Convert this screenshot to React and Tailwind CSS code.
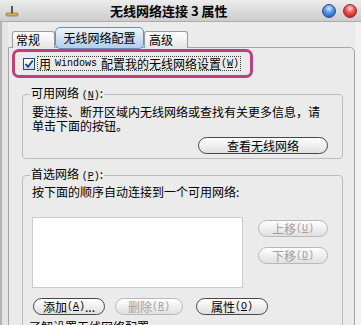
import React from 'react'

const cjk = "font-['Noto_Sans_CJK_SC','Liberation_Sans',sans-serif]"

// Mnemonic such as (W): mono bitmap-like parens with underlined letter
function Key({ k }) {
  return (
    <span className="font-['Liberation_Mono',monospace] text-[10px]">
      (<span className="underline underline-offset-1">{k}</span>)
    </span>
  )
}

function Btn({ children, disabled, className = '' }) {
  return (
    <div
      className={
        'flex h-[17px] items-center justify-center rounded-full border bg-linear-to-b from-[#ffffff] to-[#e0e0e0] text-[12px] leading-none ' +
        (disabled ? 'border-[#b8b8b8] text-[#a0a0a0] ' : 'border-[#474747] text-black ') +
        className
      }
    >
      {children}
    </div>
  )
}

function Ball({ color }) {
  const bg =
    color === 'blue'
      ? 'bg-[radial-gradient(circle_at_50%_30%,#d8e8ff_0%,#4f8fe6_45%,#1b4fae_100%)] border-[#2c4f8f]'
      : 'bg-[radial-gradient(circle_at_50%_30%,#ffd6d6_0%,#f04a4a_45%,#b01515_100%)] border-[#8f2c2c]'
  return <div className={'h-[14px] w-[14px] rounded-full border ' + bg} />
}

export default function App() {
  return (
    <div className={`flex h-[325px] w-[361px] flex-col overflow-hidden bg-[#ebebeb] text-[12px] text-black ${cjk}`}>
      {/* Title bar */}
      <div className="flex h-[22px] shrink-0 items-center border-b border-[#ababab] bg-linear-to-b from-[#ececec] to-[#cdcdcd]">
        <svg width="14" height="12" viewBox="0 0 14 12" className="ml-[5px]">
          <rect x="6" y="1" width="2" height="8" fill="#555" />
          <rect x="1" y="8" width="12" height="3" rx="1" fill="#d6b04a" stroke="#7a6020" strokeWidth="0.6" />
        </svg>
        <span className="ml-[91px] text-[13px] font-bold leading-none">无线网络连接 3 属性</span>
        <div className="flex-1" />
        <Ball color="blue" />
        <div className="w-[7px]" />
        <Ball color="red" />
        <div className="w-[4px]" />
      </div>

      <div className="flex min-h-0 flex-1">
        <div className="w-[8px] shrink-0 border-l-2 border-[#b3b3b3] bg-[#e4e4e4]" />

        <div className="flex w-[347px] shrink-0 flex-col">
          {/* Tabs */}
          <div className="relative z-10 -mb-px flex h-[26px] shrink-0 items-end pl-[4px]">
            <div className="h-[17px] w-[43px] rounded-t-[3px] border border-b-0 border-[#9a9a9a] bg-linear-to-b from-[#ffffff] to-[#e6e6e6] pl-[3px] leading-[16px]">
              常规
            </div>
            <div className="mb-[-1px] flex h-[22px] w-[89px] items-center justify-center rounded-[5px] border border-[#6d8db4] bg-linear-to-b from-[#edf5fd] to-[#b2cfee] leading-none">
              无线网络配置
            </div>
            <div className="h-[17px] w-[44px] rounded-t-[3px] border border-b-0 border-[#9a9a9a] bg-linear-to-b from-[#ffffff] to-[#e6e6e6] pl-[4px] leading-[16px]">
              高级
            </div>
          </div>

          {/* Tab panel */}
          <div className="flex flex-1 flex-col rounded-tr-[5px] border border-[#a6a6a6] bg-[#ebebeb]">
            {/* Highlighted checkbox row */}
            <div className="ml-[3px] mt-[1px] flex h-[29px] w-[241px] items-center rounded-[7px] border-[3px] border-[#bd3f7b] pl-[8px]">
              <div className="flex h-[12px] w-[12px] items-center justify-center border border-[#1e4f86] bg-linear-to-b from-[#ffffff] to-[#d8d8d8]">
                <svg width="10" height="10" viewBox="0 0 10 10">
                  <path d="M1.5 5 L4 7.8 L8.8 1.5" fill="none" stroke="#1d3f94" strokeWidth="1.8" />
                </svg>
              </div>
              <div className="ml-[2px] flex h-[15px] items-center border border-dotted border-[#444] px-[1px] leading-none">
                用 <span className="mx-[4px] font-['Liberation_Mono',monospace] text-[10px]">Windows</span>配置我的无线网络设置<Key k="W" />
              </div>
            </div>

            {/* Available networks */}
            <fieldset className="ml-[13px] mt-[7px] w-[321px] rounded-[4px] border border-[#bdbdbd] px-[9px] pb-[4px]">
              <legend className="-ml-[2px] px-[1px] leading-[16px]">
                可用网络 <Key k="N" />:
              </legend>
              <div className="pt-[1px] leading-[14px]">
                要连接、断开区域内无线网络或查找有关更多信息，请
                <br />
                单击下面的按钮。
              </div>
              <div className="mt-[4px] flex justify-end pr-[5px]">
                <Btn className="w-[130px]">查看无线网络</Btn>
              </div>
            </fieldset>

            {/* Preferred networks */}
            <fieldset className="ml-[13px] mt-[7px] w-[321px] rounded-[4px] border border-[#bdbdbd] px-[9px]">
              <legend className="-ml-[2px] px-[1px] leading-[16px]">
                首选网络 <Key k="P" />:
              </legend>
              <div className="leading-[13px]">按下面的顺序自动连接到一个可用网络:</div>
              <div className="mt-[19px] flex">
                <div className="h-[71px] w-[211px] border border-[#cacaca] bg-white" />
                <div className="ml-[15px] flex flex-col">
                  <Btn disabled className="mt-[3px] w-[70px]">
                    上移<Key k="U" />
                  </Btn>
                  <Btn disabled className="mt-[10px] w-[70px]">
                    下移<Key k="D" />
                  </Btn>
                </div>
              </div>
              <div className="ml-[1px] mt-[10px] flex">
                <Btn className="w-[72px]">
                  添加<Key k="A" />...
                </Btn>
                <Btn disabled className="ml-[10px] w-[68px]">
                  删除<Key k="R" />
                </Btn>
                <Btn className="ml-[13px] w-[72px]">
                  属性<Key k="O" />
                </Btn>
              </div>
              <div className="mt-[5px] flex items-start">
                <span className="-ml-[3px] leading-[13px]">了解设置无线网络配置。</span>
                <div className="ml-auto mr-[10px] mt-[5px] flex h-[18px] w-[60px] items-center justify-center rounded-[3px] border-2 border-[#222] bg-[#f2f2f2] leading-none">
                  高级<Key k="V" />
                </div>
              </div>
            </fieldset>
          </div>
        </div>

        <div className="flex-1 bg-[#f2f2f2]" />
      </div>
    </div>
  )
}
